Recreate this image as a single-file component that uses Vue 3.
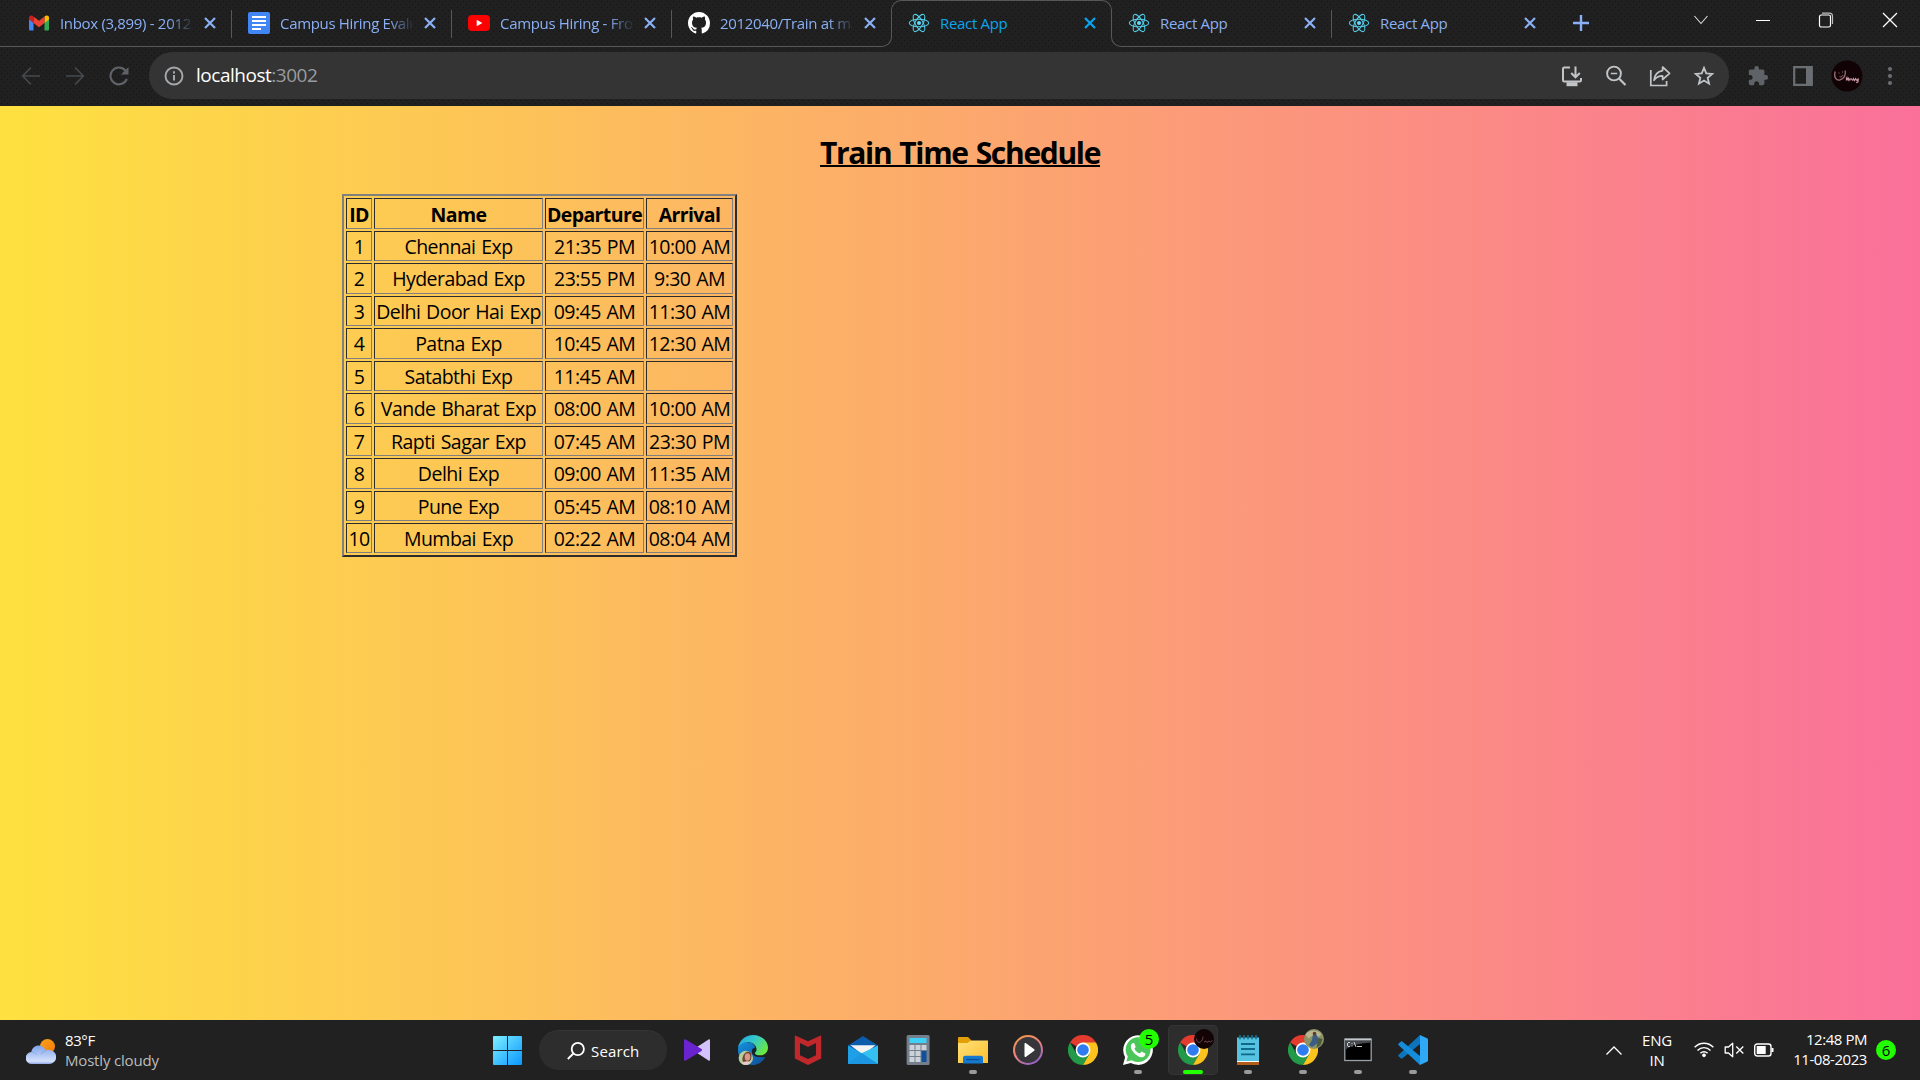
<script setup>
const tabs = [
  { icon: 'gmail', title: 'Inbox (3,899) - 2012' },
  { icon: 'docs', title: 'Campus Hiring Evalu' },
  { icon: 'youtube', title: 'Campus Hiring - Fron' },
  { icon: 'github', title: '2012040/Train at ma' },
  { icon: 'react', title: 'React App', active: true },
  { icon: 'react', title: 'React App' },
  { icon: 'react', title: 'React App' },
]

const trains = [
  [1, 'Chennai Exp', '21:35 PM', '10:00 AM'],
  [2, 'Hyderabad Exp', '23:55 PM', '9:30 AM'],
  [3, 'Delhi Door Hai Exp', '09:45 AM', '11:30 AM'],
  [4, 'Patna Exp', '10:45 AM', '12:30 AM'],
  [5, 'Satabthi Exp', '11:45 AM', ''],
  [6, 'Vande Bharat Exp', '08:00 AM', '10:00 AM'],
  [7, 'Rapti Sagar Exp', '07:45 AM', '23:30 PM'],
  [8, 'Delhi Exp', '09:00 AM', '11:35 AM'],
  [9, 'Pune Exp', '05:45 AM', '08:10 AM'],
  [10, 'Mumbai Exp', '02:22 AM', '08:04 AM'],
]

const apps = [
  { name: 'visualstudio' },
  { name: 'edge' },
  { name: 'mcafee' },
  { name: 'mail' },
  { name: 'calculator' },
  { name: 'explorer', open: true },
  { name: 'media' },
  { name: 'chrome' },
  { name: 'whatsapp', open: true, badge: '5' },
  { name: 'chrome', open: true, active: true, avatar: 'dark' },
  { name: 'notepad', open: true },
  { name: 'chrome', open: true, avatar: 'photo' },
  { name: 'terminal', open: true },
  { name: 'vscode', open: true },
]
</script>

<template>
  <div class="screen">
    <header class="chrome">
      <div class="strip">
        <div v-for="(t, i) in tabs" :key="i" class="tab" :class="{ active: t.active, before: i === 3, after: i === 5, last: i === 6 }">
          <svg v-if="t.icon === 'gmail'" class="fav" viewBox="0 0 22 22">
            <path d="M1 6v11.200C1 18 1.600 18.500 2.300 18.500H5.500V9z" fill="#4285f4" />
            <path d="M21 6v11.200c0 .8-.6 1.300-1.300 1.300H16.500V9z" fill="#34a853" />
            <path d="M16.500 4.600V11L21 7.500V5.700c0-2.200-2.300-2.800-3.600-1.800z" fill="#fbbc04" />
            <path d="M5.500 11V4.600L11 8.800l5.500-4.200V11L11 15.200z" fill="#ea4335" />
            <path d="M1 5.700v1.800L5.500 11V4.600l-.9-.7C3.300 2.900 1 3.500 1 5.700z" fill="#c5221f" />
          </svg>
          <svg v-else-if="t.icon === 'docs'" class="fav" viewBox="0 0 22 22">
            <rect width="22" height="22" rx="2" fill="#4285f4" />
            <path d="M4 5h14M4 9h14M4 13h14M4 17h9" stroke="#fff" stroke-width="2.200" />
          </svg>
          <svg v-else-if="t.icon === 'youtube'" class="fav" viewBox="0 0 22 22">
            <rect y="3" width="22" height="16" rx="4" fill="#f00" />
            <path d="M8.700 7.700v6.600l5.700-3.300z" fill="#fff" />
          </svg>
          <svg v-else-if="t.icon === 'github'" class="fav" viewBox="0 0 16 16">
            <path fill="#fff" d="M8 0C3.580 0 0 3.580 0 8c0 3.540 2.290 6.530 5.470 7.590.4.070.55-.17.55-.38 0-.19-.01-.82-.01-1.490-2.010.37-2.530-.49-2.690-.94-.09-.23-.48-.94-.82-1.130-.28-.15-.68-.52-.01-.53.63-.01 1.080.58 1.230.82.72 1.210 1.870.87 2.330.66.07-.52.28-.87.51-1.070-1.780-.2-3.640-.89-3.640-3.950 0-.87.31-1.590.82-2.150-.08-.2-.36-1.020.08-2.120 0 0 .67-.21 2.200.82.64-.18 1.320-.27 2-.27s1.360.09 2 .27c1.530-1.040 2.200-.82 2.200-.82.44 1.100.16 1.920.08 2.120.51.56.82 1.270.82 2.150 0 3.070-1.870 3.750-3.650 3.950.29.25.54.73.54 1.480 0 1.070-.01 1.930-.01 2.200 0 .21.15.46.55.38A8.010 8.010 0 0 0 16 8c0-4.420-3.580-8-8-8z" />
          </svg>
          <svg v-else class="fav" viewBox="0 0 22 22" fill="none" stroke="#55cbe6" stroke-width="1.050">
            <ellipse cx="11" cy="11" rx="9.700" ry="3.800" />
            <ellipse cx="11" cy="11" rx="9.700" ry="3.800" transform="rotate(60 11 11)" />
            <ellipse cx="11" cy="11" rx="9.700" ry="3.800" transform="rotate(120 11 11)" />
            <circle cx="11" cy="11" r="2" fill="#61dafb" stroke="none" />
          </svg>
          <span class="title" :class="{ fade: i < 4 }">{{ t.title }}</span>
          <svg class="x" viewBox="0 0 12 12"><path d="M1 1l10 10M11 1L1 11" fill="none" stroke="currentColor" stroke-width="2.200" /></svg>
        </div>
        <svg class="plus" viewBox="0 0 16 16"><path d="M8 0v16M0 8h16" stroke="#8ab0fa" stroke-width="2.400" /></svg>
        <div class="winctl">
          <svg width="14" height="10" viewBox="0 0 14 10"><path d="M.5 1L7 8.500 13.500 1" fill="none" stroke="#ddd" stroke-width="1.100" /></svg>
          <svg width="14" height="14" viewBox="0 0 14 14"><path d="M0 7.500h14" stroke="#fff" /></svg>
          <svg width="16" height="16" viewBox="0 0 16 16" fill="none" stroke="#fff"><rect x="1.500" y="3" width="11" height="12" rx="1.800" stroke-width="1.200" /><path d="M4 1.200h7.500a3 3 0 0 1 3 3V12" stroke="#bbb" stroke-width="1.200" /></svg>
          <svg width="16" height="16" viewBox="0 0 16 16"><path d="M1 1l14 14M15 1L1 15" stroke="#fff" stroke-width="1.250" /></svg>
        </div>
      </div>

      <div class="toolbar">
        <div class="nav">
          <svg viewBox="0 0 20 20" fill="none" stroke="#46494c" stroke-width="1.700"><path d="M19 10H2M10 1.500L1.700 10l8.300 8.500" /></svg>
          <svg viewBox="0 0 20 20" fill="none" stroke="#46494c" stroke-width="1.700"><path d="M1 10h17M10 1.500l8.300 8.500-8.300 8.500" /></svg>
          <svg viewBox="0 0 20 20" fill="none" stroke="#5f6368" stroke-width="2.100"><path d="M17.800 12.800A8.400 8.400 0 1 1 16.300 4.500" /><path d="M19.500 1v7.500h-7.600z" fill="#5f6368" stroke="none" /></svg>
        </div>
        <div class="omnibox">
          <svg class="info" viewBox="0 0 20 20"><circle cx="10" cy="10" r="8.500" fill="none" stroke="#a4a8ac" stroke-width="1.900" /><path d="M10 9v5.500M10 5.300v2.200" stroke="#a4a8ac" stroke-width="2" /></svg>
          <span class="url">localhost<i>:3002</i></span>
          <div class="oicons">
            <svg viewBox="0 0 22 22" fill="none" stroke="#c2c5c8" stroke-width="2"><path d="M9 2.500H3.200c-.7 0-1.200.5-1.200 1.200v11.600c0 .7.500 1.200 1.200 1.200h15.600c.7 0 1.200-.5 1.200-1.200V13" /><path d="M14.500 1.500v10M10.200 8l4.300 4.300L18.800 8" /><path d="M5.500 19.200h11" stroke-width="4" /></svg>
            <svg viewBox="0 0 22 22" fill="none" stroke="#c2c5c8" stroke-width="1.900"><circle cx="9" cy="8.500" r="6.900" /><path d="M14 13.500l6.500 6.500" stroke-width="2.200" /><path d="M5.800 8.500h6.400" stroke-width="1.500" /></svg>
            <svg viewBox="0 0 22 22" fill="none" stroke="#c2c5c8" stroke-width="1.700"><path d="M1.800 5v15.500h15.800V16" /><path d="M13.600 2l7 6.300-7 6.200v-3.700c-4 0-6.500 1.300-8.600 4.600.4-5 3.100-8.800 8.600-9.800z" stroke-linejoin="round" /></svg>
            <svg viewBox="0 0 22 22" fill="none" stroke="#c2c5c8" stroke-width="1.800"><path d="M11 2.900l2.250 5.550 5.950.45-4.550 3.900 1.400 5.850L11 15.500l-5.050 3.150 1.400-5.850-4.550-3.900 5.950-.45z" /></svg>
          </div>
        </div>
        <div class="ext">
          <svg class="puzzle" width="22" height="22" viewBox="0 0 24 24" fill="#5f6368"><path d="M20.500 11H19V7c0-1.100-.9-2-2-2h-4V3.500a2.500 2.500 0 0 0-5 0V5H4c-1.100 0-1.990.9-1.990 2v3.800H3.500c1.490 0 2.700 1.210 2.700 2.700s-1.210 2.700-2.700 2.700H2V20c0 1.100.9 2 2 2h3.800v-1.500c0-1.490 1.210-2.700 2.700-2.700s2.700 1.210 2.700 2.700V22H17c1.100 0 2-.9 2-2v-4h1.500a2.500 2.500 0 0 0 0-5z" /></svg>
          <svg class="panel" width="20" height="20" viewBox="0 0 20 20"><path d="M1.200 1.200h17.600v17.600H1.200z" fill="none" stroke="#6a6e73" stroke-width="2.200" /><path d="M13 1h6v18h-6z" fill="#6a6e73" /></svg>
          <svg class="me" width="32" height="32" viewBox="0 0 32 32"><circle cx="16" cy="16" r="15.500" fill="#100205" /><path d="M4.200 11.500c-1.800 6 1 9 4.500 8.500 4.200-.7 6.300-5 5.500-9.500" fill="none" stroke="#9c6c74" stroke-width="1.300" /><path d="M8 12.500v1M11.500 11.500v1M8.500 16.800c1.600.5 3-.4 3.400-1.600" stroke="#9c6c74" fill="none" /><path d="M15.500 20.500v-2.500l1.600 2v-2l1.700 2c.5-1.500 1.500-1.800 2.200-.2.500.8 1 .6 1.400-1.100l1.200 1.800 1-1.800 1.300 1.800 1.500-2-.5 3.500-1.700.8" fill="none" stroke="#c99aa5" stroke-width="1.200" /></svg>
          <svg class="dots" width="6" height="20" viewBox="0 0 6 20" fill="#6a6e73"><circle cx="3" cy="3" r="2.100" /><circle cx="3" cy="10" r="2.100" /><circle cx="3" cy="17" r="2.100" /></svg>
        </div>
      </div>
    </header>

    <main class="page">
      <h1><span>Train Time Schedule</span></h1>
      <table>
        <colgroup><col class="c1" /><col class="c2" /><col class="c3" /><col class="c4" /></colgroup>
        <thead>
          <tr><th>ID</th><th>Name</th><th>Departure</th><th>Arrival</th></tr>
        </thead>
        <tbody>
          <tr v-for="row in trains" :key="row[0]">
            <td v-for="(cell, c) in row" :key="c">{{ cell }}</td>
          </tr>
        </tbody>
      </table>
    </main>

    <footer class="taskbar">
      <div class="weather">
        <svg width="30" height="26" viewBox="0 0 30 26">
          <defs>
            <linearGradient id="sun" x1="0" y1="0" x2="1" y2="1"><stop offset="0" stop-color="#f9a01c" /><stop offset="1" stop-color="#f57c0a" /></linearGradient>
            <linearGradient id="cloud" x1="0" y1="0" x2="0" y2="1"><stop offset="0" stop-color="#7ea4ea" /><stop offset=".55" stop-color="#b6cbf5" /><stop offset=".85" stop-color="#d5e0fa" /><stop offset="1" stop-color="#8fa9e6" /></linearGradient>
          </defs>
          <circle cx="21.500" cy="7.500" r="7.500" fill="url(#sun)" />
          <path d="M6 25a6 6 0 0 1-.6-12C6 9 9 6.500 12.700 6.500c3.500 0 6 2 7 5 1-.5 2-.6 3-.5a7 7 0 0 1 1 14z" fill="url(#cloud)" />
          <path d="M5.400 13c2.600-.2 4.600 1.200 5.600 3M19.700 11.500c-2 .5-3.700 2-4.200 4" fill="none" stroke="#7596e0" stroke-width=".8" opacity=".7" />
        </svg>
        <div class="wtext"><b>83°F</b><span>Mostly cloudy</span></div>
      </div>

      <div class="dock">
        <svg class="start" viewBox="0 0 29 29">
          <defs><linearGradient id="win" gradientUnits="userSpaceOnUse" x1="0" y1="0" x2="29" y2="29"><stop offset="0" stop-color="#7df0ff" /><stop offset="1" stop-color="#0a96ff" /></linearGradient></defs>
          <path d="M1 0h13v14H0V1a1 1 0 0 1 1-1zM15 0h13a1 1 0 0 1 1 1v13H15zM0 15h14v14H1a1 1 0 0 1-1-1zM15 15h14v13a1 1 0 0 1-1 1H15z" fill="url(#win)" />
        </svg>
        <div class="search">
          <svg width="18" height="18" viewBox="0 0 18 18" fill="none" stroke="#fff" stroke-width="1.800"><circle cx="10.800" cy="7" r="6.100" /><path d="M6.400 11.500L.8 17" /></svg>
          <span>Search</span>
        </div>
        <div v-for="(a, i) in apps" :key="i" class="app" :class="{ open: a.open, active: a.active }">
          <svg v-if="a.name === 'visualstudio'" viewBox="0 0 30 30">
            <path d="M25.500 4.500c.8-.5 1.500-.1 1.500.8v19.400c0 .9-.7 1.300-1.500.8L11 16v-2z" fill="#d4c2fa" />
            <path d="M2.800 4.500C2 4 1 4.400 1 5.300v19.400c0 .9 1 1.300 1.800.8L18.500 16c.8-.6.8-1.400 0-2z" fill="#6a24cf" />
          </svg>
          <svg v-else-if="a.name === 'edge'" viewBox="0 0 30 30">
            <defs>
              <linearGradient id="e1" x1="0" y1="0" x2="1" y2=".6"><stop offset="0" stop-color="#1aa1e2" /><stop offset=".5" stop-color="#36c9c9" /><stop offset="1" stop-color="#6ae843" /></linearGradient>
              <linearGradient id="e2" x1="0" y1="0" x2="1" y2="1"><stop offset="0" stop-color="#1492de" /><stop offset="1" stop-color="#114a94" /></linearGradient>
            </defs>
            <path d="M0 15C0 8 3 7 8 7c7 0 9 3 9 6l-3 3c-1 5 5 7 13.500 6C25 26.500 20.500 30 15 30 6 30 0 23 0 15z" fill="url(#e2)" />
            <path d="M14 15c1-2 3-3 4.500-1.500 0 2-1 2.500-1.500 4 0 2 3 3.500 6 3-4 2.500-9.500 0-9-5.500z" fill="#17222b" />
            <path d="M.3 12C1.500 5 7.500 0 15 0c9 0 15 6.500 15 12.500 0 5-3.500 7.800-8 7.800-3.500 0-5.700-1.300-5-2.500 1-1.200 1.700-2 1.500-4C18 9.500 14 7 9.500 7 5.500 7 2 9 .3 12z" fill="url(#e1)" />
            <circle cx="7.800" cy="23" r="7.200" fill="#b7ce9c" /><path d="M4.500 26c-.5-5 2-8.500 5-9.500 3 .3 4.500 2 4 5l-.5 3c-2 3-6 4-8.500 1.500z" fill="#704238" /><ellipse cx="9.500" cy="22" rx="2.800" ry="3.800" fill="#d79a83" /><path d="M4 28.500c2-2.500 6.500-3 8.500-.6-2 2-6 2.600-8.500.6z" fill="#e7c8cb" />
          </svg>
          <svg v-else-if="a.name === 'mcafee'" viewBox="0 0 30 30">
            <path d="M1.800.2L15 6.300 28.200.2v23.400L15 30 1.800 23.600zM7 8v12.300l8 3.700 8-3.700V8l-8 4z" fill="#c0282c" fill-rule="evenodd" />
          </svg>
          <svg v-else-if="a.name === 'mail'" viewBox="0 0 30 30">
            <path d="M0 10.500L15 1l15 9.500V17H0z" fill="#0b5cab" /><path d="M2.500 10.200h25L15 20z" fill="#f3f3f3" />
            <path d="M0 10.500L15 19l15 10H0z" fill="#1f9fe6" /><path d="M30 10.500V29L13 18.500z" fill="#35c0f2" /><path d="M0 29h29L14 18z" fill="#1c96e0" />
          </svg>
          <svg v-else-if="a.name === 'calculator'" viewBox="0 0 30 30">
            <rect x="3.600" width="23" height="30" rx="1.500" fill="#757f8b" /><rect x="6.500" y="3" width="17" height="5" fill="#3fd0f5" />
            <path d="M6.500 10h5v5h-5zM12.500 10h5v5h-5zM18.500 10h5v5h-5zM6.500 16h5v5h-5zM12.500 16h5v5h-5zM6.500 22h5v5h-5zM12.500 22h5v5h-5z" fill="#cbd2da" /><path d="M18.500 16h5v11h-5z" fill="#13509b" />
          </svg>
          <svg v-else-if="a.name === 'explorer'" viewBox="0 0 30 30">
            <defs><linearGradient id="fold" x1="0" y1="0" x2="1" y2="1"><stop offset="0" stop-color="#ffe07a" /><stop offset="1" stop-color="#fbc02d" /></linearGradient></defs>
            <path d="M0 3.200c0-.7.500-1.200 1.200-1.200H10l3 3v5H0z" fill="#e2a008" /><path d="M0 8h9.500L13 5.500h17V28H0z" fill="url(#fold)" />
            <path d="M5 28.500V23c0-1.300.9-2.200 2.200-2.200h15.600c1.300 0 2.200.9 2.200 2.200v5.500z" fill="#1479cf" /><path d="M8.500 24.500h13" stroke="#0a4e96" stroke-width="1.300" />
          </svg>
          <svg v-else-if="a.name === 'media'" viewBox="0 0 30 30">
            <defs><linearGradient id="md" x1=".2" y1="0" x2=".8" y2="1"><stop offset="0" stop-color="#f5964f" /><stop offset=".5" stop-color="#e58384" /><stop offset="1" stop-color="#8f5fd0" /></linearGradient></defs>
            <circle cx="15" cy="15" r="14" fill="#36363a" stroke="url(#md)" stroke-width="2" /><path d="M11.500 8.700c0-.8.600-1 1.200-.6l8.500 6.200c.5.400.5 1 0 1.400l-8.500 6.200c-.6.400-1.200.2-1.200-.6z" fill="#fff" />
          </svg>
          <svg v-else-if="a.name === 'chrome'" viewBox="0 0 30 30">
            <path d="M15 15L2 7.500A15 15 0 0 1 28 7.500z" fill="#e33b2e" /><path d="M2 7.500A15 15 0 0 0 15 30l6.500-11.200L15 15 8.500 18.800z" fill="#229a48" /><path d="M28 7.500H15l6.500 11.300L15 30A15 15 0 0 0 28 7.500z" fill="#fcc31e" />
            <circle cx="15" cy="15" r="7.400" fill="#fff" /><circle cx="15" cy="15" r="5.800" fill="#2f7cf0" />
          </svg>
          <svg v-else-if="a.name === 'whatsapp'" viewBox="0 0 30 30">
            <path d="M0 30l2.100-7.700A14.800 14.800 0 1 1 7.800 28z" fill="#fff" /><path d="M3.400 26.600l1.400-5A12.400 12.400 0 1 1 8.700 25.300z" fill="#4bc65a" />
            <path d="M10.200 8c-.8 0-2.600 1.400-2.400 4 .3 3.600 5.600 9.500 10.200 10.200 2.500.3 4.600-1.400 4.400-3.700l-3.900-1.900-1.800 2c-2.300-.8-4.400-2.800-5.300-4.800l1.300-1.700L11.200 8.100z" fill="#fff" />
          </svg>
          <svg v-else-if="a.name === 'notepad'" viewBox="0 0 30 30">
            <path d="M4 26h22v4H4z" fill="#b25c1c" /><path d="M4 25h22v2H4z" fill="#fff" /><path d="M4 2.500h22V26H4z" fill="#56c3e0" />
            <path d="M7 .8v2.700M11 .8v2.700M15 .8v2.700M19 .8v2.700M23 .8v2.700" stroke="#14708f" stroke-width="1.800" stroke-linecap="round" /><path d="M8 9h14M8 14h14M8 19.300h14" stroke="#11698a" stroke-width="1.800" />
          </svg>
          <svg v-else-if="a.name === 'terminal'" viewBox="0 0 30 30">
            <rect x="1.800" y="4" width="26.400" height="21.500" fill="#000" stroke="#9aa0a6" stroke-width="1.300" /><path d="M2.500 4.700h25v3C16 8 6 11 2.500 15z" fill="#45484c" /><path d="M2 4.500h26" stroke="#c5c8cc" stroke-width="1.600" />
            <path d="M5 7.500h2M4.500 8v3M5 11.500h2M9 8v1M9 10.500v1M11 7l2 5M14 11.500h5" stroke="#ddd" stroke-width=".9" fill="none" />
          </svg>
          <svg v-else viewBox="0 0 30 30">
            <path d="M22 0v9L4.500 23.300c-.5.500-1.200.5-1.700 0L.7 21.500c-.6-.5-.6-1.300 0-1.800z" fill="#0b74bd" /><path d="M22 30v-9L4.500 6.700c-.5-.5-1.200-.5-1.700 0L.7 8.500c-.6.500-.6 1.300 0 1.800z" fill="#168ddc" /><path d="M22 0l7 3.200c.6.300 1 .8 1 1.500v20.600c0 .7-.4 1.200-1 1.500L22 30z" fill="#2fa8f5" />
          </svg>
          <span v-if="a.badge" class="badge">{{ a.badge }}</span>
          <svg v-if="a.avatar === 'dark'" class="ava" viewBox="0 0 20 20"><circle cx="10" cy="10" r="10" fill="#120305" /><path d="M2.500 9.500c0 4 3 5 5 2.500 1.200-1.500 1.500-3 1.500-4.500M10 13l2-1 1 1.500 2-1.500 1.500 1 2-1.500" fill="none" stroke="#74464e" /></svg>
          <svg v-if="a.avatar === 'photo'" class="ava" viewBox="0 0 20 20"><circle cx="10" cy="10" r="10" fill="#8a9267" /><path d="M1.500 5.500a10 10 0 0 1 16 0l-4 3-5-2-4 3z" fill="#b9b68d" /><path d="M9 6l3-1 3 5-1 4-6 4-3-2 3-5z" fill="#3b5c85" /><circle cx="10.500" cy="4.500" r="1.800" fill="#5a3a2b" /><path d="M14.500 9l4 1-2 6-4 3z" fill="#4c5a35" /></svg>
        </div>
      </div>

      <div class="tray">
        <svg class="up" width="16" height="9" viewBox="0 0 16 9"><path d="M.5 8.500L8 1l7.500 7.500" fill="none" stroke="#fff" stroke-width="1.300" /></svg>
        <div class="lang"><span>ENG</span><span>IN</span></div>
        <div class="status">
          <svg width="20" height="16" viewBox="0 0 20 16" fill="none" stroke="#fff" stroke-width="1.400"><path d="M.6 5.300c5.200-5.400 13.600-5.400 18.800 0M3.500 8.400c3.600-3.700 9.400-3.700 13 0M6.400 11.200c2-2 5.200-2 7.200 0" /><circle cx="10" cy="13.300" r="1.500" fill="#fff" stroke-width=".8" /></svg>
          <svg width="20" height="16" viewBox="0 0 20 16" fill="none" stroke="#fff" stroke-width="1.300"><path d="M8.700 1.200v13.600L4.500 11H1.200V5h3.300z" stroke-linejoin="round" /><path d="M12.300 4.500l7 7M19.300 4.500l-7 7" /></svg>
          <svg width="20" height="14" viewBox="0 0 20 14"><rect x=".7" y="1" width="16.300" height="12" rx="2.500" fill="none" stroke="#fff" stroke-width="1.400" /><rect x="2.700" y="3" width="9" height="8" fill="#fff" /><path d="M18.500 5v4" stroke="#fff" stroke-width="2" /></svg>
        </div>
        <div class="clock"><span>12:48 PM</span><span>11-08-2023</span></div>
        <span class="notif">6</span>
      </div>
    </footer>
  </div>
</template>

<style>
body {
  margin: 0;
  overflow: hidden;
}
</style>

<style scoped>
.screen {
  width: 1920px;
  height: 1080px;
  display: flex;
  flex-direction: column;
  overflow: hidden;
  font-family: "Open Sans", "Noto Sans", sans-serif;
  color: #000;
}
.screen svg {
  display: block;
  flex: none;
}
.screen *,
.screen *::before,
.screen *::after {
  box-sizing: border-box;
}

/* browser frame */
.chrome {
  height: 106px;
  flex: none;
  background-color: #202020;
  background-image: radial-gradient(circle at 1.500px 1.500px, #141414 0.5px, transparent 1px), radial-gradient(circle at 4.500px 4.500px, #141414 0.5px, transparent 1px);
  background-size: 6px 6px;
}
.strip {
  height: 47px;
  display: flex;
  padding-left: 12px;
  position: relative;
}
.strip::before {
  content: "";
  position: absolute;
  left: 0;
  bottom: 0;
  width: 882px;
  height: 1px;
  background: #555758;
}
.strip::after {
  content: "";
  position: absolute;
  left: 1121px;
  right: 0;
  bottom: 0;
  height: 1px;
  background: #555758;
}
.tab {
  width: 220px;
  height: 47px;
  flex: none;
  display: flex;
  align-items: center;
  padding: 0 0 1px 16px;
  position: relative;
  color: #8ab0f5;
}
.tab::after {
  content: "";
  position: absolute;
  right: 0;
  top: 10px;
  width: 1px;
  height: 28px;
  background: #4a5874;
}
.tab.before::after,
.tab.active::after,
.tab.last::after {
  display: none;
}
.tab.active {
  color: #08a5f0;
}
.tab.active::before {
  content: "";
  position: absolute;
  left: -1px;
  top: 0;
  width: 221px;
  height: 37px;
  border: 1px solid #555758;
  border-bottom: 0;
  border-radius: 10px 10px 0 0;
}
.tab.before::before,
.tab.after::before {
  content: "";
  position: absolute;
  bottom: 0;
  width: 10px;
  height: 10px;
  border-bottom: 1px solid #555758;
}
.tab.before::before {
  right: 0;
  border-right: 1px solid #555758;
  border-radius: 0 0 10px 0;
}
.tab.after::before {
  left: -1px;
  border-left: 1px solid #555758;
  border-radius: 0 0 0 10px;
}
.fav {
  width: 22px;
  height: 22px;
}
.title {
  margin: -1px 0 0 10px;
  width: 132px;
  overflow: hidden;
  white-space: nowrap;
  font-size: 15px;
  line-height: 22px;
  letter-spacing: -0.32px;
}
.fade {
  -webkit-mask-image: linear-gradient(to right, #000 82%, transparent 102%);
  mask-image: linear-gradient(to right, #000 82%, transparent 102%);
}
.x {
  width: 12px;
  height: 12px;
  margin-left: 12px;
}
.plus {
  width: 16px;
  height: 16px;
  margin: 15px 0 0 21px;
}
.winctl {
  margin-left: auto;
  padding: 12px 22px 0 0;
  height: 28px;
  display: flex;
  align-items: center;
  gap: 48px;
}
.toolbar {
  height: 59px;
  display: flex;
  align-items: center;
  padding: 0 0 2px;
}
.nav {
  width: 149px;
  padding-left: 21px;
  display: flex;
  gap: 24px;
  flex: none;
}
.nav svg {
  width: 20px;
  height: 20px;
}
.omnibox {
  width: 1580px;
  height: 47px;
  border-radius: 24px;
  background: #343434;
  display: flex;
  align-items: center;
  padding: 0 14px 0 15px;
  flex: none;
}
.info {
  width: 20px;
  height: 20px;
}
.url {
  margin: -2px 0 0 12px;
  font-size: 19px;
  letter-spacing: -0.48px;
  line-height: 26px;
  color: #fff;
}
.url i {
  font-style: normal;
  color: #999c9f;
}
.oicons {
  margin-left: auto;
  display: flex;
  gap: 22px;
}
.oicons svg {
  width: 22px;
  height: 22px;
}
.ext {
  flex: 1;
  display: flex;
  align-items: center;
}
.puzzle {
  margin-left: 18px;
}
.panel {
  margin-left: 24px;
}
.me {
  margin-left: 18px;
}
.dots {
  margin-left: 24px;
}

/* page */
.page {
  height: 914px;
  flex: none;
  background: linear-gradient(to right, #fee140 0%, #fa709a 100%);
}
h1 {
  margin: 0;
  padding-top: 26px;
  height: 88px;
  text-align: center;
  font-size: 30px;
  line-height: 42px;
  font-weight: 700;
  letter-spacing: -1.32px;
  word-spacing: 1.500px;
}
h1 span {
  display: inline-block;
  height: 35px;
  border-bottom: 2px solid #000;
}
table {
  margin-left: 342px;
  width: 395px;
  table-layout: fixed;
  border-collapse: separate;
  border-spacing: 2px;
  border: 2px solid;
  border-color: #808080 #2c2c2c #2c2c2c #808080;
  font-size: 19.500px;
  letter-spacing: -0.54px;
  word-spacing: 1.200px;
  text-align: center;
}
.c1 {
  width: 26px;
}
.c2 {
  width: 169px;
}
.c3 {
  width: 99px;
}
.c4 {
  width: 87px;
}
th,
td {
  padding: 0;
  height: 30px;
  line-height: 27px;
  border: 1px solid;
  border-color: #2c2c2c #808080 #808080 #2c2c2c;
  white-space: nowrap;
}
th,
tbody tr:nth-child(even):not(:last-child) td {
  height: 31px;
}
th {
  padding-top: 2px;
  font-weight: 700;
  letter-spacing: -0.6px;
}

/* taskbar */
.taskbar {
  height: 60px;
  flex: none;
  background: #212121;
  display: flex;
  align-items: stretch;
  color: #fff;
  font-size: 15px;
}
.weather {
  width: 480px;
  padding-left: 26px;
  display: flex;
  align-items: center;
}
.weather svg {
  margin-top: 3px;
}
.wtext {
  margin-left: 9px;
  display: flex;
  flex-direction: column;
  line-height: 20px;
  letter-spacing: -0.4px;
}
.wtext b {
  font-weight: 400;
}
.wtext span {
  color: #bcbcbc;
  letter-spacing: -0.18px;
}
.dock {
  display: flex;
  align-items: center;
  padding-left: 13px;
}
.start {
  width: 29px;
  height: 29px;
}
.search {
  margin: 0 6px 0 17px;
  width: 128px;
  height: 40px;
  border-radius: 20px;
  background: #2d2d2d;
  border-top: 1px solid #363636;
  display: flex;
  align-items: center;
  padding-left: 28px;
}
.search span {
  margin-left: 6px;
  font-size: 15px;
  letter-spacing: 0.15px;
  line-height: 20px;
}
.app {
  width: 50px;
  height: 50px;
  margin-right: 5px;
  border-radius: 5px;
  padding: 10px;
  position: relative;
}
.app > svg:first-child {
  width: 30px;
  height: 30px;
}
.app.active {
  background: #2d2d2d;
  box-shadow: inset 0 0 0 1px #353535;
}
.app.open::after {
  content: "";
  position: absolute;
  left: 21px;
  bottom: 1px;
  width: 8px;
  height: 4px;
  border-radius: 2px;
  background: #9a9a9a;
}
.app.active::after {
  left: 15px;
  width: 20px;
  background: #2f0;
}
.badge,
.ava {
  position: absolute;
  left: 26px;
  top: 4px;
  width: 20px;
  height: 20px;
}
.badge,
.notif {
  border-radius: 50%;
  background: #2f0;
  color: #000;
  text-align: center;
  font-size: 15px;
  line-height: 20px;
}
.tray {
  margin-left: auto;
  padding-right: 24px;
  display: flex;
  align-items: center;
  line-height: 20px;
}
.lang {
  width: 30px;
  margin-left: 20px;
  display: flex;
  flex-direction: column;
  align-items: center;
  letter-spacing: -0.2px;
}
.status {
  margin-left: 22px;
  display: flex;
  align-items: center;
  gap: 10px;
}
.clock {
  width: 93px;
  display: flex;
  flex-direction: column;
  align-items: flex-end;
  letter-spacing: -0.45px;
  margin-top: -2px;
}
.notif {
  margin-left: 9px;
  width: 20px;
  height: 20px;
}
</style>
